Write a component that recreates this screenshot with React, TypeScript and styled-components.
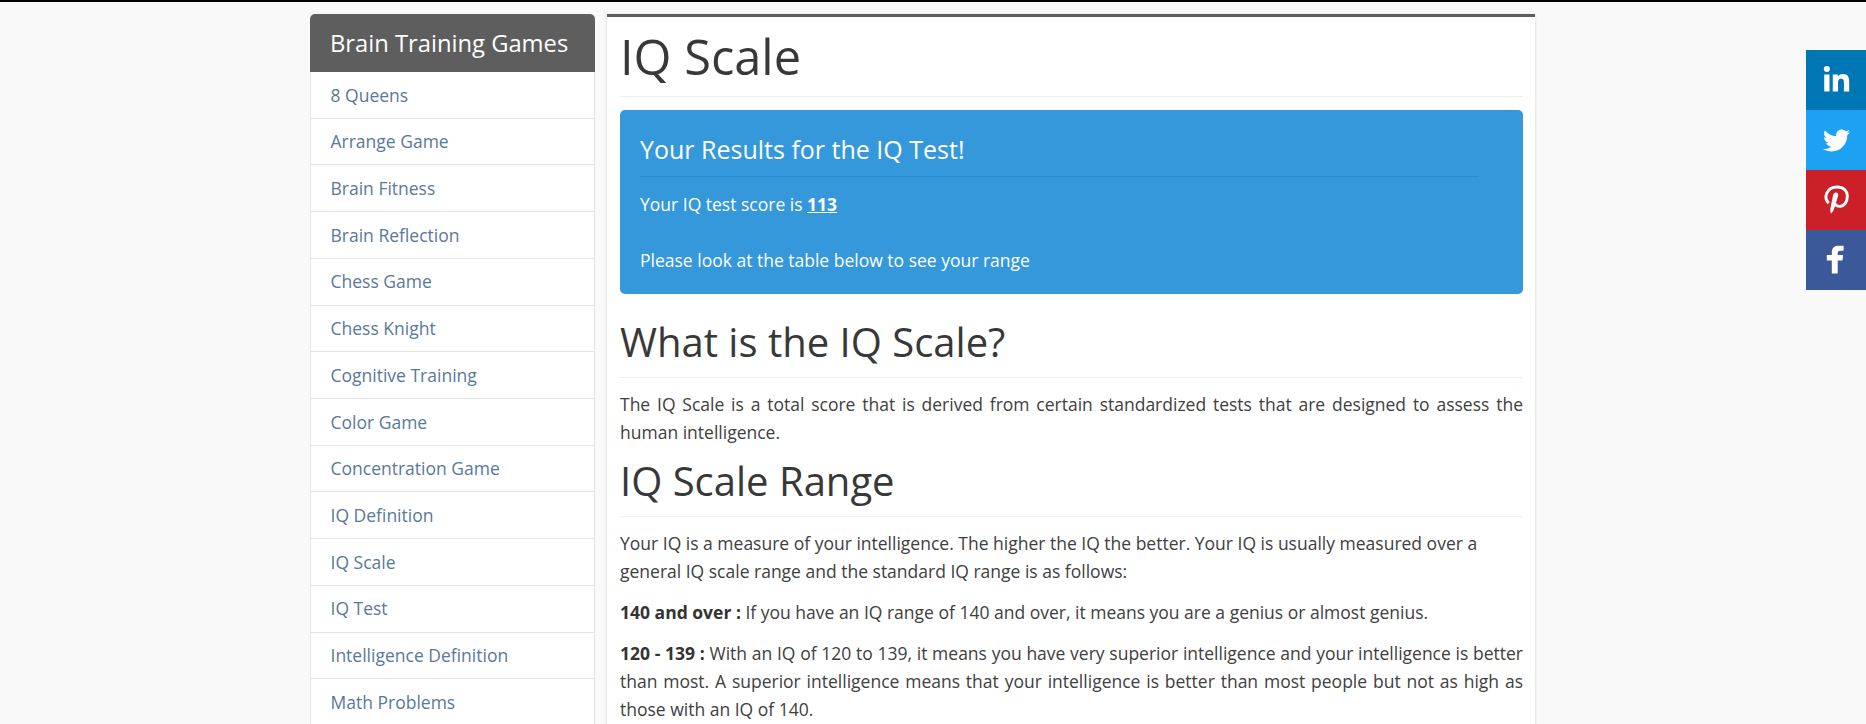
import React from 'react';
import styled, { createGlobalStyle } from 'styled-components';
import { FaLinkedinIn, FaTwitter } from 'react-icons/fa';

const GlobalStyle = createGlobalStyle`
  *, *::before, *::after { box-sizing: border-box; }
  body {
    margin: 0;
    height: 724px;
    overflow: hidden;
    background: #f9f9f9;
    color: #404040;
    font: 400 17.5px/28px "Open Sans", sans-serif;
  }
`;

const Page = styled.div`
  height: 724px;
  overflow: hidden;
  border-top: 2px solid #000;
  padding: 12px 0 0 310px;
  display: flex;
  align-items: flex-start;
  gap: 12px;
`;

const Sidebar = styled.nav`
  width: 285px;
  flex: none;
`;

const SidebarTitle = styled.div`
  height: 58px;
  padding: 0 20px;
  border-radius: 5px 5px 0 0;
  background: #5e5e5e;
  color: #fff;
  font-size: 23.75px;
  line-height: 58px;
  white-space: nowrap;
`;

const SidebarLink = styled.a`
  display: block;
  height: 46.72px;
  padding: 10.5px 19.5px;
  border: 1px solid #e4e4e4;
  border-top: 0;
  background: #fff;
  color: #5a7899;
  line-height: 25.7px;
  text-decoration: none;
  white-space: nowrap;
`;

const Main = styled.main`
  width: 928px;
  height: 760px;
  flex: none;
  padding: 0 12px 0 13px;
  border-top: 3px solid #5e5e5e;
  background: #fff;
  box-shadow: 0 1px 3px rgba(0, 0, 0, 0.16);
`;

const Title = styled.h1`
  height: 80px;
  margin: 0 0 13px;
  border-bottom: 1px solid #eee;
  color: #383838;
  font-size: 48.75px;
  font-weight: 400;
  line-height: 78px;
`;

const Heading = styled.h2<{ $top: number }>`
  height: 58px;
  margin: ${(p) => p.$top}px 0 12px;
  border-bottom: 1px solid #eee;
  color: #383838;
  font-size: 40px;
  font-weight: 400;
  line-height: 44px;
`;

const Results = styled.section`
  height: 184px;
  padding: 20px 44px 0 20px;
  border-radius: 5px;
  background: #3498db;
  color: #fff;
`;

const ResultsTitle = styled.h3`
  height: 47px;
  margin: 0 0 13px;
  border-bottom: 1px solid #2f89c9;
  font-size: 25px;
  font-weight: 400;
  line-height: 38px;
`;

const Paragraph = styled.p<{ $justify?: boolean }>`
  margin: 0 0 13px;
  text-align: ${(p) => (p.$justify ? 'justify' : 'left')};
`;

const ResultLine = styled.p`
  margin: 0 0 28px;
`;

const Range = styled.b`
  color: #333;
  font-weight: 700;
`;

const Score = styled.b`
  font-weight: 700;
  text-decoration: underline;
`;

const Share = styled.aside`
  position: fixed;
  top: 50px;
  right: 0;
  width: 60px;
`;

const ShareButton = styled.a<{ $color: string }>`
  display: flex;
  align-items: center;
  justify-content: center;
  height: 60px;
  background: ${(p) => p.$color};
  color: #fff;
`;

const PinterestIcon = () => (
  <svg width="60" height="60" viewBox="0 0 60 60" fill="none">
    <path
      d="M22.8 33.2C17 28 20.5 17 31 17C38 17 41.4 21.4 41.4 26C41.4 32 38 36.4 33.8 36.4C31.2 36.4 29.4 35.2 28.8 33.4"
      stroke="currentColor"
      strokeWidth="2.9"
    />
    <path
      d="M27 25.6Q27.6 22.6 30 22.6Q32.6 22.8 32.2 25.6L28.4 38Q27.2 42 25 43.8Q23.6 41.4 24.6 37.4Z"
      fill="currentColor"
    />
  </svg>
);

const FacebookIcon = () => (
  <svg width="60" height="60" viewBox="0 0 60 60" fill="currentColor">
    <path d="M25.8 43.5V30.4H20.8V25.1H25.8V22.6C25.8 17.5 28.6 15.7 33 15.7H37.6V20.8H34.6C32.4 20.8 31.7 21.6 31.7 23.3V25.1H37L36.5 30.4H31.7V43.5Z" />
  </svg>
);

const games = [
  '8 Queens', 'Arrange Game', 'Brain Fitness', 'Brain Reflection', 'Chess Game',
  'Chess Knight', 'Cognitive Training', 'Color Game', 'Concentration Game',
  'IQ Definition', 'IQ Scale', 'IQ Test', 'Intelligence Definition', 'Math Problems',
];

export default function App() {
  return (
    <>
      <GlobalStyle />
      <Page>
        <Sidebar>
          <SidebarTitle>Brain Training Games</SidebarTitle>
          {games.map((g) => <SidebarLink key={g}>{g}</SidebarLink>)}
        </Sidebar>
        <Main>
          <Title>IQ Scale</Title>
          <Results>
            <ResultsTitle>Your Results for the IQ Test!</ResultsTitle>
            <ResultLine>Your IQ test score is <Score>113</Score></ResultLine>
            <ResultLine>Please look at the table below to see your range</ResultLine>
          </Results>
          <Heading $top={26}>What is the IQ Scale?</Heading>
          <Paragraph $justify>
            The IQ Scale is a total score that is derived from certain standardized tests that are designed to assess the human intelligence.
          </Paragraph>
          <Heading $top={12}>IQ Scale Range</Heading>
          <Paragraph>
            Your IQ is a measure of your intelligence. The higher the IQ the better. Your IQ is usually measured over a general IQ scale range and the standard IQ range is as follows:
          </Paragraph>
          <Paragraph $justify>
            <Range>140 and over :</Range> If you have an IQ range of 140 and over, it means you are a genius or almost genius.
          </Paragraph>
          <Paragraph $justify>
            <Range>120 - 139 :</Range> With an IQ of 120 to 139, it means you have very superior intelligence and your intelligence is better than most. A superior intelligence means that your intelligence is better than most people but not as high as those with an IQ of 140.
          </Paragraph>
        </Main>
      </Page>
      <Share>
        <ShareButton $color="#0077b5"><FaLinkedinIn size={29} /></ShareButton>
        <ShareButton $color="#1da1f2"><FaTwitter size={27} /></ShareButton>
        <ShareButton $color="#cb2027"><PinterestIcon /></ShareButton>
        <ShareButton $color="#3b5998"><FacebookIcon /></ShareButton>
      </Share>
    </>
  );
}
